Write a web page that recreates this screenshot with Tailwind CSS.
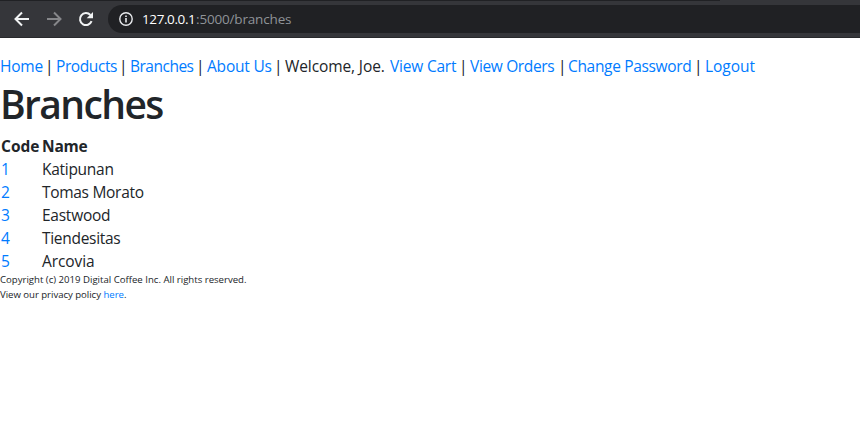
<!DOCTYPE html>
<html lang="en">
<head>
<meta charset="utf-8">
<title>Branches</title>
<script src="https://cdn.jsdelivr.net/npm/@tailwindcss/browser@4"></script>
</head>
<body class="h-[441px] overflow-hidden bg-white font-['Open_Sans','Noto_Sans',sans-serif] text-[15.5px] leading-6 text-[#212529]">
<header class="flex h-[38px] items-start border-b border-[#28292c] bg-[#35363a]">
  <div class="flex h-full w-full flex-col">
    <div class="h-px w-[720px] shrink-0 bg-[#202124]"></div>
    <div class="mt-1 flex h-7 items-center">
      <svg class="ml-[14px] size-4 shrink-0" viewBox="0 0 16 16" fill="none" stroke="#f1f3f4" stroke-width="2"><path d="M15 8H2.5M8 1.5 1.5 8 8 14.5"/></svg>
      <svg class="ml-4 size-4 shrink-0" viewBox="0 0 16 16" fill="none" stroke="#86878a" stroke-width="2"><path d="M1 8h12.5M8 1.5 14.5 8 8 14.5"/></svg>
      <svg class="ml-4 size-4 shrink-0" viewBox="0 0 16 16" fill="none"><path d="M13.6 10.2A6 6 0 1 1 12.4 4" stroke="#f1f3f4" stroke-width="2"/><path d="M15 1v6.3H8.7z" fill="#f1f3f4"/></svg>
      <div class="ml-[14px] flex h-7 grow items-center rounded-l-full bg-[#202124] pl-[11px]">
        <svg class="size-[14px] shrink-0" viewBox="0 0 14 14"><circle cx="7" cy="7" r="6.2" fill="none" stroke="#e8eaed" stroke-width="1.4"/><path d="M6.2 6h1.6v4.5H6.2zM6.2 3.4h1.6V5H6.2z" fill="#e8eaed"/></svg>
        <div class="ml-[9px] flex text-[13.5px] leading-5"><span class="w-[54px] tracking-[-0.4px] text-white">127.0.0.1</span><span class="text-[#8f9398] tracking-[-0.17px]">:5000/branches</span></div>
      </div>
    </div>
  </div>
</header>
<nav class="mt-4 flex h-6 whitespace-nowrap font-normal tracking-[-0.2px] text-[#007bff]">
  <a class="w-[45px]">Home</a><span class="w-[11px] text-[#212529]">|</span>
  <a class="w-[63px] tracking-[-0.4px]">Products</a><span class="w-[11px] text-[#212529]">|</span>
  <a class="w-[66px] tracking-[-0.5px]">Branches</a><span class="w-[11px] text-[#212529]">|</span>
  <a class="w-[67px] tracking-[-0.2px]">About Us</a><span class="w-[11px] text-[#212529]">|</span>
  <span class="w-[105px] tracking-[-0.1px] text-[#212529]">Welcome, Joe.</span>
  <a class="w-[69px] tracking-[-0.2px]">View Cart</a><span class="w-[11px] text-[#212529]">|</span>
  <a class="w-[88px] tracking-[-0.35px]">View Orders</a><span class="w-[10px] text-[#212529]">|</span>
  <a class="w-[126px] tracking-[-0.33px]">Change Password</a><span class="w-[11px] text-[#212529]">|</span>
  <a class="tracking-[-0.05px]">Logout</a>
</nav>
<main>
  <h1 class="mt-[2px] h-[55px] text-[39px] font-semibold leading-[48px] tracking-[-1.6px]">Branches</h1>
  <div class="grid grid-cols-[41px_auto] auto-rows-[23px] pl-px leading-[23px]">
    <b>Code</b><b class="tracking-[-0.2px]">Name</b>
    <a class="text-[#007bff]">1</a><span class="tracking-[-0.28px]">Katipunan</span>
    <a class="text-[#007bff]">2</a><span class="tracking-[-0.3px]">Tomas Morato</span>
    <a class="text-[#007bff]">3</a><span class="tracking-[-0.25px]">Eastwood</span>
    <a class="text-[#007bff]">4</a><span class="tracking-[-0.3px]">Tiendesitas</span>
    <a class="text-[#007bff]">5</a><span class="tracking-[-0.1px]">Arcovia</span>
  </div>
</main>
<footer class="-mt-px text-[9.6px] leading-[15px]">
  <p>Copyright (c) 2019 Digital Coffee Inc. All rights reserved.</p>
  <p class="tracking-[-0.03px]">View our privacy policy <a class="text-[#007bff]">here</a>.</p>
</footer>
</body>
</html>
